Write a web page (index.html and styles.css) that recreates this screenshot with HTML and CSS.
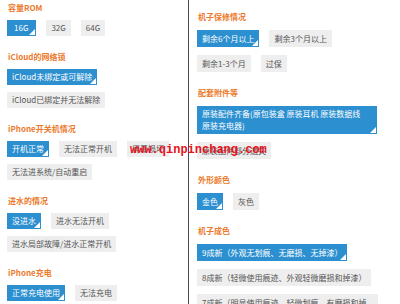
FILE: index.html
```html
<!DOCTYPE html>
<html lang="zh">
<head>
<meta charset="utf-8">
<link rel="stylesheet" href="styles.css">
</head>
<body>
<div class="page">
  <div class="col col-left">
    <section class="sec">
      <h3 class="title">容量ROM</h3>
      <div class="opts">
        <span class="opt on wide">16G</span>
        <span class="opt">32G</span>
        <span class="opt">64G</span>
      </div>
    </section>
    <section class="sec">
      <h3 class="title">iCloud的网络锁</h3>
      <div class="opts">
        <span class="opt on">iCloud未绑定或可解除</span>
        <span class="opt">iCloud已绑定并无法解除</span>
      </div>
    </section>
    <section class="sec">
      <h3 class="title">iPhone开关机情况</h3>
      <div class="opts">
        <span class="opt on">开机正常</span>
        <span class="opt">无法正常开机</span>
        <span class="opt">屏幕损坏</span>
        <span class="opt">无法进系统/自动重启</span>
      </div>
    </section>
    <section class="sec">
      <h3 class="title">进水的情况</h3>
      <div class="opts">
        <span class="opt on">没进水</span>
        <span class="opt">进水无法开机</span>
        <span class="opt">进水局部故障/进水正常开机</span>
      </div>
    </section>
    <section class="sec">
      <h3 class="title">iPhone充电</h3>
      <div class="opts">
        <span class="opt on">正常充电使用</span>
        <span class="opt">无法充电</span>
      </div>
    </section>
  </div>
  <div class="col col-right">
    <section class="sec">
      <h3 class="title">机子保修情况</h3>
      <div class="opts">
        <span class="opt on">剩余6个月以上</span>
        <span class="opt">剩余3个月以上</span>
        <span class="opt">剩余1-3个月</span>
        <span class="opt">过保</span>
      </div>
    </section>
    <section class="sec">
      <h3 class="title">配套附件等</h3>
      <div class="opts">
        <span class="opt on block">原装配件齐备(原包装盒 原装耳机 原装数据线<br>原装充电器)</span>
        <span class="opt">原装配件部分遗失</span>
      </div>
    </section>
    <section class="sec">
      <h3 class="title">外形颜色</h3>
      <div class="opts">
        <span class="opt on">金色</span>
        <span class="opt">灰色</span>
      </div>
    </section>
    <section class="sec">
      <h3 class="title">机子成色</h3>
      <div class="opts">
        <span class="opt on">9成新（外观无划痕、无磨损、无掉漆）</span>
        <span class="opt">8成新（轻微使用痕迹、外观轻微磨损和掉漆）</span>
        <span class="opt">7成新（明显使用痕迹，轻微划痕，有磨损和掉漆）</span>
      </div>
    </section>
  </div>
  <div class="watermark">www.qinpinchang.com</div>
</div>
</body>
</html>
```

FILE: styles.css
```css
html, body {
  margin: 0;
  padding: 0;
  background: #ffffff;
}
body {
  font-family: "Noto Sans CJK SC", "Microsoft YaHei", sans-serif;
  font-size: 8px;
  color: #555555;
  overflow: hidden;
  width: 400px;
  height: 304px;
}
.page {
  position: relative;
  display: grid;
  grid-template-columns: 189px 1fr;
  height: 304px;
  overflow: hidden;
}
.col-left {
  border-right: 1px solid #4a4a4a;
  padding: 3px 6px 0 7px;
}
.col-right {
  padding: 12px 22px 0 8px;
}
.sec {
  margin-bottom: 16px;
}
.title {
  margin: 0 0 7px 1px;
  font-size: 8px;
  line-height: 10px;
  font-weight: bold;
  color: #ec7a2c;
}
.col-right .title {
  margin-bottom: 8px;
}
.opts {
  display: flex;
  flex-wrap: wrap;
  gap: 7px 10px;
  align-items: flex-start;
}
.col-right .opts {
  gap: 8px 10px;
}
.opt {
  position: relative;
  display: inline-block;
  background: #eeeeee;
  color: #555555;
  line-height: 12px;
  padding: 2px 5px;
}
.col-right .opt {
  line-height: 13px;
}
.opt.on {
  background: #2b8fd0;
  color: #ffffff;
}
.opt.on.wide {
  padding: 2px 8px 2px 7px;
}
.col-right .opt.block {
  width: 170px;
  line-height: 12px;
}
.opt.on::after {
  content: "";
  position: absolute;
  right: 1px;
  bottom: 1px;
  width: 0;
  height: 0;
  border-style: solid;
  border-width: 0 0 6px 6px;
  border-color: transparent transparent #ffffff transparent;
}
.watermark {
  position: absolute;
  left: 130px;
  top: 143px;
  font-family: "Liberation Mono", monospace;
  font-size: 12px;
  font-weight: bold;
  line-height: 14px;
  color: #e5141e;
}
```
